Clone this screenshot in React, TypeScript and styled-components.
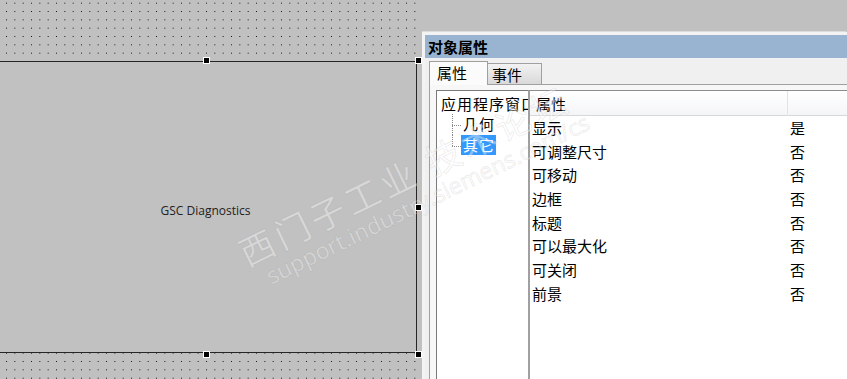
import React from "react";
import styled, { createGlobalStyle, css } from "styled-components";

const CJK = `"Noto Sans CJK SC", "Microsoft YaHei", sans-serif`;

const GlobalStyle = createGlobalStyle`
  html, body { margin: 0; padding: 0; background: #c0c0c0; overflow: hidden; }
  * { box-sizing: border-box; }
`;

const dotTile = encodeURIComponent(
  `<svg xmlns='http://www.w3.org/2000/svg' width='25' height='25'>` +
    [6, 14.33, 22.67]
      .map((x) =>
        [2.67, 11, 19.33]
          .map((y) => `<rect x='${x}' y='${y}' width='1' height='1' fill='#1a1a1a'/>`)
          .join("")
      )
      .join("") +
    `</svg>`
);

const Root = styled.div`
  position: relative;
  width: 847px;
  height: 379px;
  display: flex;
  overflow: hidden;
  background: #c0c0c0;
`;

const Canvas = styled.div`
  position: relative;
  flex: none;
  width: 422px;
  height: 100%;
  background-color: #c0c0c0;
  background-image: url("data:image/svg+xml;utf8,${dotTile}");
  background-size: 25px 25px;
`;

const DesignWindow = styled.div`
  position: absolute;
  left: -12px;
  top: 61px;
  width: 429px;
  height: 292px;
  background: #c1c1c1;
  border: 1px solid #262626;
  border-width: 1px 1px 1px 0;
  display: flex;
  align-items: center;
  justify-content: center;
  padding: 6px 0 0 7px;
  font-family: "Open Sans", "Segoe UI", sans-serif;
  font-size: 12px;
  color: #222;
`;

const Handle = styled.span<{ $x: number; $y: number }>`
  position: absolute;
  left: ${(p) => p.$x - 3}px;
  top: ${(p) => p.$y - 3}px;
  width: 7px;
  height: 7px;
  background: #000;
  border: 1px solid #fff;
`;

const Panel = styled.div`
  flex: 1;
  min-width: 0;
  margin-top: 32px;
  display: flex;
  flex-direction: column;
  background: #f0f0f0;
  border-top: 3px solid #f3f3f3;
  border-left: 3px solid #f3f3f3;
  box-shadow: -1px -1px 0 #dcdcdc;
  overflow: hidden;
`;

const TitleBar = styled.div`
  height: 23px;
  flex: none;
  background: #99b4d1;
  padding-left: 3px;
  font-family: ${CJK};
  font-weight: bold;
  font-size: 15px;
  line-height: 23px;
  color: #000;
  white-space: nowrap;
`;

const Body = styled.div`
  flex: 1;
  display: flex;
  flex-direction: column;
  padding: 3px 0 0 4px;
`;

const TabStrip = styled.div`
  display: flex;
  align-items: flex-end;
  height: 23px;
  flex: none;
`;

const Tab = styled.div<{ $active?: boolean }>`
  font-family: ${CJK};
  font-size: 15px;
  color: #000;
  border: 1px solid #a0a0a0;
  border-bottom: none;
  white-space: nowrap;
  ${(p) =>
    p.$active
      ? css`
          width: 59px;
          height: 24px;
          background: #fbfbfb;
          padding-left: 7px;
          line-height: 22px;
          position: relative;
          z-index: 1;
          margin-bottom: -1px;
        `
      : css`
          width: 54px;
          height: 21px;
          background: linear-gradient(#f2f2f2, #d9d9d9);
          border-left: none;
          padding-left: 4px;
          line-height: 21px;
        `}
`;

const TabPage = styled.div`
  flex: 1;
  display: flex;
  border-top: 1px solid #a0a0a0;
  border-left: 1px solid #a0a0a0;
  padding: 5px 0 0 6px;
  background: #f7f7f7;
`;

const Tree = styled.div`
  width: 92px;
  flex: none;
  background: #fff;
  border-left: 1px solid #7a7a7a;
  border-top: 1px solid #7a7a7a;
  padding: 2px 0 0 4px;
  overflow: hidden;
  font-family: ${CJK};
  font-size: 15px;
  letter-spacing: 1px;
  color: #000;
`;

const TreeRow = styled.div<{ $indent?: number }>`
  display: flex;
  height: 21px;
  line-height: 21px;
  white-space: nowrap;
  padding-left: ${(p) => p.$indent ?? 0}px;
`;

const Connector = styled.span<{ $last?: boolean }>`
  position: relative;
  width: 9px;
  flex: none;
  &::before {
    content: "";
    position: absolute;
    left: 0;
    top: 0;
    height: ${(p) => (p.$last ? "11px" : "100%")};
    border-left: 1px dotted #8a8a8a;
  }
  &::after {
    content: "";
    position: absolute;
    left: 0;
    top: 11px;
    width: 9px;
    border-top: 1px dotted #8a8a8a;
  }
`;

const TreeLabel = styled.span<{ $selected?: boolean }>`
  padding: 0 1px 0 2px;
  height: 20px;
  line-height: 20px;
  ${(p) =>
    p.$selected &&
    css`
      background: #3399ff;
      color: #fff;
    `}
`;

const Grid = styled.div`
  flex: 1;
  min-width: 0;
  background: #fff;
  border-left: 2px solid #a0a0a0;
  border-top: 1px solid #8c8c8c;
  font-family: ${CJK};
  font-size: 15px;
  color: #000;
`;

const GridHeader = styled.div`
  display: grid;
  grid-template-columns: 258px 1fr;
  height: 25px;
  background: linear-gradient(#ffffff, #f4f5f7);
  border-bottom: 1px solid #d8d8d8;
`;

const HeaderCell = styled.div`
  padding-left: 6px;
  line-height: 25px;
  border-right: 1px solid #e3e3e3;
  &:last-child { border-right: none; }
`;

const GridRow = styled.div`
  display: grid;
  grid-template-columns: 258px 1fr;
  height: 23.7px;
  line-height: 23.7px;
  white-space: nowrap;
`;

const Cell = styled.div`
  padding-left: 2px;
`;

const Watermark = styled.div`
  position: absolute;
  left: 232px;
  top: 236px;
  transform: rotate(-26deg);
  transform-origin: 0 0;
  pointer-events: none;
  display: flex;
  flex-direction: column;
  color: rgba(255, 255, 255, 0.4);
  -webkit-text-stroke: 1px rgba(110, 110, 110, 0.12);
  white-space: nowrap;
`;

const WatermarkTitle = styled.span`
  font-family: ${CJK};
  font-size: 35px;
  line-height: 40px;
  letter-spacing: 4px;
`;

const WatermarkUrl = styled.span`
  font-family: "Open Sans", sans-serif;
  font-size: 23px;
  line-height: 24px;
  padding-left: 14px;
`;

const props: [string, string][] = [
  ["显示", "是"],
  ["可调整尺寸", "否"],
  ["可移动", "否"],
  ["边框", "否"],
  ["标题", "否"],
  ["可以最大化", "否"],
  ["可关闭", "否"],
  ["前景", "否"],
];

export default function App() {
  return (
    <Root>
      <GlobalStyle />
      <Canvas>
        <DesignWindow>GSC Diagnostics</DesignWindow>
        <Handle $x={206} $y={60} />
        <Handle $x={418} $y={60} />
        <Handle $x={418} $y={207} />
        <Handle $x={206} $y={354} />
        <Handle $x={418} $y={354} />
      </Canvas>
      <Panel>
        <TitleBar>对象属性</TitleBar>
        <Body>
          <TabStrip>
            <Tab $active>属性</Tab>
            <Tab>事件</Tab>
          </TabStrip>
          <TabPage>
            <Tree>
              <TreeRow>应用程序窗口</TreeRow>
              <TreeRow $indent={11}>
                <Connector />
                <TreeLabel>几何</TreeLabel>
              </TreeRow>
              <TreeRow $indent={11}>
                <Connector $last />
                <TreeLabel $selected>其它</TreeLabel>
              </TreeRow>
            </Tree>
            <Grid>
              <GridHeader>
                <HeaderCell>属性</HeaderCell>
                <HeaderCell />
              </GridHeader>
              {props.map(([k, v]) => (
                <GridRow key={k}>
                  <Cell>{k}</Cell>
                  <Cell>{v}</Cell>
                </GridRow>
              ))}
            </Grid>
          </TabPage>
        </Body>
      </Panel>
      <Watermark>
        <WatermarkTitle>西门子工业 技术论坛</WatermarkTitle>
        <WatermarkUrl>support.industry.siemens.com/cs</WatermarkUrl>
      </Watermark>
    </Root>
  );
}
